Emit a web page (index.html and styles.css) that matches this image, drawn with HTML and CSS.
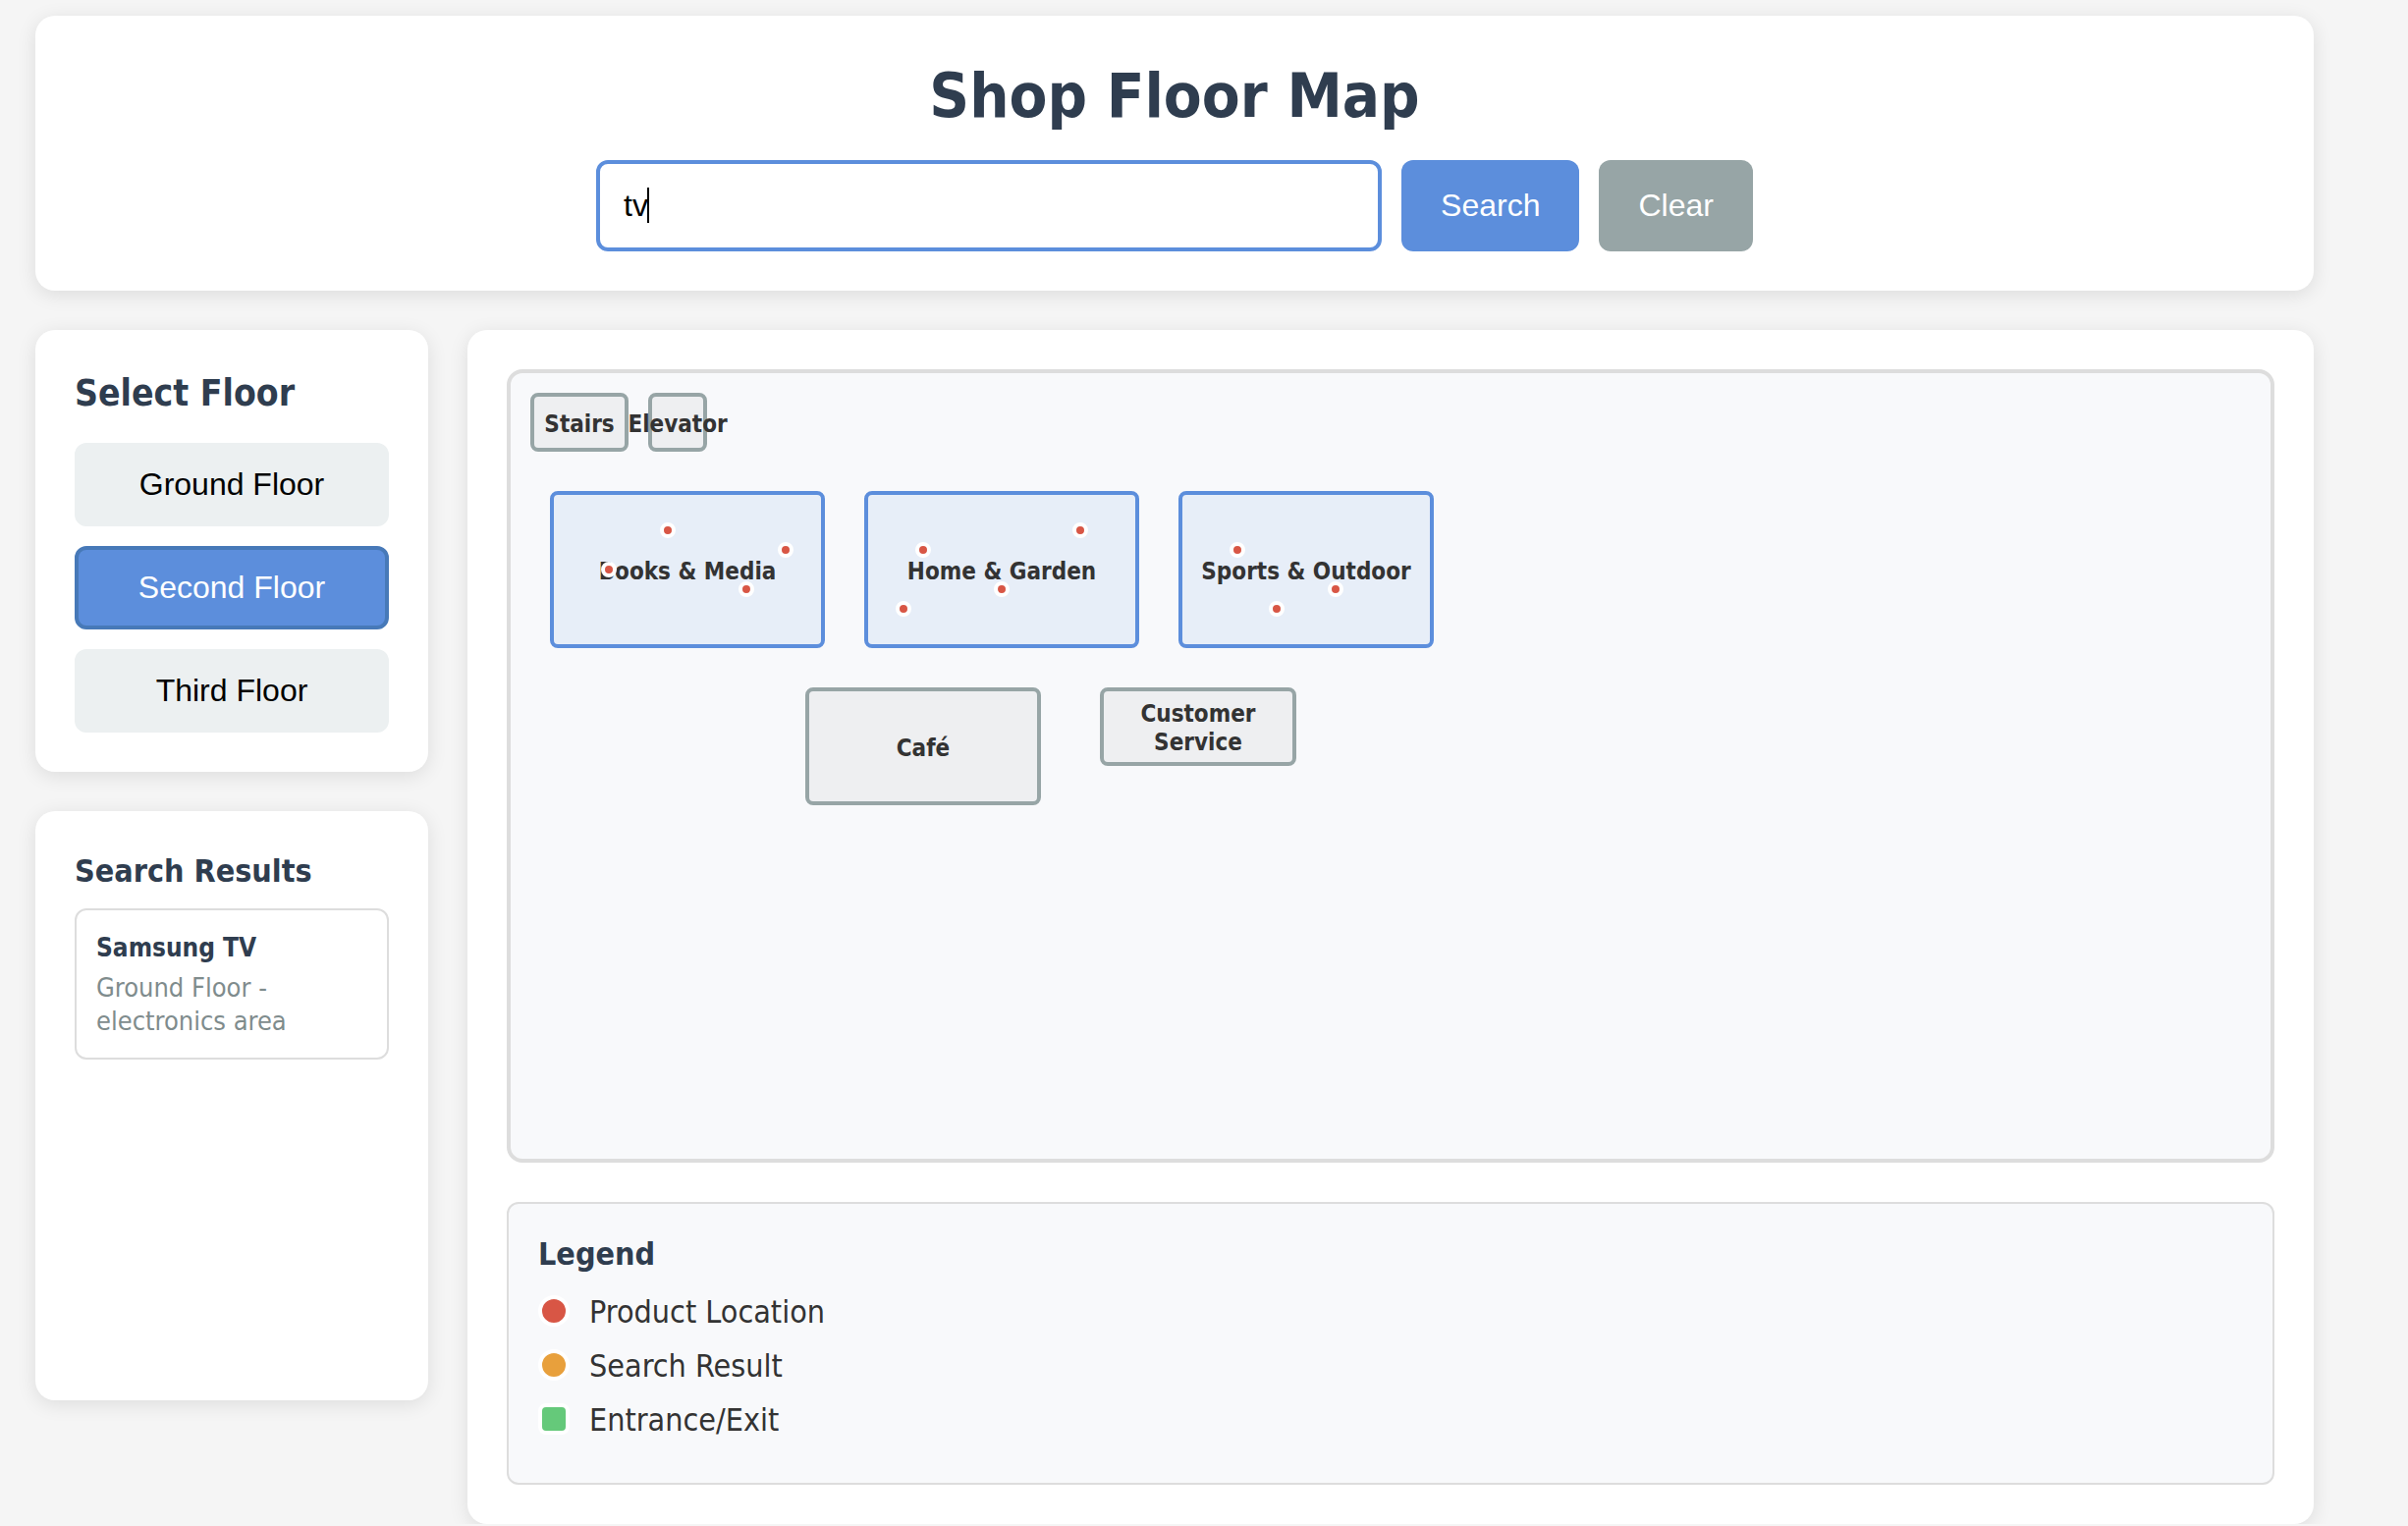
FILE: index.html
```html
<!DOCTYPE html>
<html lang="en">
<head>
<meta charset="utf-8">
<title>Shop Floor Map</title>
<link rel="stylesheet" href="styles.css">
</head>
<body>
<header class="card header">
  <h1 class="title">Shop Floor Map</h1>
  <form class="search">
    <div class="search-field">
      <input class="search-input" type="text" value="tv" aria-label="Search products">
      <span class="caret"></span>
    </div>
    <button class="btn btn-primary" type="button">Search</button>
    <button class="btn btn-muted" type="button">Clear</button>
  </form>
</header>
<div class="layout">
  <aside class="sidebar">
    <section class="card">
      <h2 class="panel-title">Select Floor</h2>
      <div class="floors">
        <button class="floor" type="button">Ground Floor</button>
        <button class="floor floor-active" type="button">Second Floor</button>
        <button class="floor" type="button">Third Floor</button>
      </div>
    </section>
    <section class="card results">
      <h3 class="sub-title">Search Results</h3>
      <div class="result">
        <h4 class="result-name">Samsung TV</h4>
        <p class="result-place">Ground Floor - electronics area</p>
      </div>
    </section>
  </aside>
  <main class="card">
    <div class="map">
      <div class="zone facility stairs">Stairs</div>
      <div class="zone facility elevator">Elevator</div>
      <div class="zone books">Books &amp; Media</div>
      <div class="zone home">Home &amp; Garden</div>
      <div class="zone sports">Sports &amp; Outdoor</div>
      <div class="zone facility cafe">Café</div>
      <div class="zone facility service">Customer Service</div>
      <span class="pin" style="left:160px;top:160px"></span>
      <span class="pin" style="left:280px;top:180px"></span>
      <span class="pin" style="left:100px;top:200px"></span>
      <span class="pin" style="left:240px;top:220px"></span>
      <span class="pin" style="left:420px;top:180px"></span>
      <span class="pin" style="left:580px;top:160px"></span>
      <span class="pin" style="left:500px;top:220px"></span>
      <span class="pin" style="left:400px;top:240px"></span>
      <span class="pin" style="left:740px;top:180px"></span>
      <span class="pin" style="left:840px;top:220px"></span>
      <span class="pin" style="left:780px;top:240px"></span>
    </div>
    <section class="legend">
      <h3 class="sub-title">Legend</h3>
      <ul class="legend-list">
        <li class="legend-item"><span class="marker marker-product"></span><span class="legend-label">Product Location</span></li>
        <li class="legend-item"><span class="marker marker-result"></span><span class="legend-label">Search Result</span></li>
        <li class="legend-item"><span class="marker marker-entrance"></span><span class="legend-label">Entrance/Exit</span></li>
      </ul>
    </section>
  </main>
</div>
</body>
</html>
```

FILE: styles.css
```css
* {
  box-sizing: border-box;
  margin: 0;
  padding: 0;
}

body {
  padding: 16px 96px 0 36px;
  background: #f5f5f5;
  color: #333;
  font-family: Tahoma, "DejaVu Sans Condensed", sans-serif;
  font-size: 32px;
  line-height: 39px;
}

.card {
  padding: 40px;
  border-radius: 20px;
  background: #fff;
  box-shadow: 0 4px 20px rgba(0, 0, 0, 0.1);
}

.header {
  margin-bottom: 40px;
}

.title {
  margin-bottom: 24px;
  color: #2f3d4f;
  font-size: 63px;
  line-height: 83px;
  text-align: center;
}

.search {
  display: flex;
  justify-content: center;
  gap: 20px;
}

.search-field {
  position: relative;
  flex: 0 1 800px;
}

.search-input {
  display: block;
  width: 100%;
  padding: 24px;
  border: 4px solid #5c8edc;
  border-radius: 12px;
  outline: none;
  background: #fff;
  color: #000;
  font: 32px/37px "Liberation Sans", Arial, sans-serif;
}

.caret {
  position: absolute;
  top: 28px;
  left: 52px;
  width: 2px;
  height: 36px;
  background: #000;
}

.btn,
.floor {
  border: 0;
  border-radius: 12px;
  font: 32px/37px "Liberation Sans", Arial, sans-serif;
}

.btn {
  padding: 28px 40px;
  color: #fff;
}

.btn-primary {
  background: #5c8edc;
}

.btn-muted {
  background: #97a5a6;
}

.layout {
  display: grid;
  grid-template-columns: 400px 1fr;
  gap: 40px;
  align-items: start;
}

.sidebar {
  display: grid;
  gap: 40px;
}

.panel-title {
  margin-bottom: 26px;
  color: #2f3d4f;
  font-size: 37px;
  line-height: 49px;
}

.floors {
  display: grid;
  gap: 20px;
}

.floor {
  padding: 20px;
  border: 4px solid #ecf0f1;
  background: #ecf0f1;
  color: #000;
}

.floor-active {
  border-color: #4779b8;
  background: #5c8edc;
  color: #fff;
}

.results {
  min-height: 600px;
}

.sub-title {
  margin-bottom: 16px;
  color: #2f3d4f;
  font-size: 32px;
  line-height: 43px;
}

.result {
  padding: 20px;
  border: 2px solid #ddd;
  border-radius: 12px;
}

.result-name {
  margin-bottom: 6px;
  color: #2f3d4f;
  font-size: 26px;
  line-height: 36px;
}

.result-place {
  color: #7f8c8d;
  font-size: 27px;
  line-height: 34px;
}

.map {
  position: relative;
  height: 808px;
  margin-bottom: 40px;
  border: 4px solid #ddd;
  border-radius: 16px;
  background: #f8f9fb;
}

.zone {
  position: absolute;
  display: flex;
  align-items: center;
  justify-content: center;
  padding-top: 4px;
  border: 4px solid #5c8edc;
  border-radius: 8px;
  background: #e7eef8;
  font-size: 24px;
  font-weight: bold;
  line-height: 29px;
  text-align: center;
}

.facility {
  border-color: #97a5a6;
  background: #eeeff1;
}

.stairs {
  top: 20px;
  left: 20px;
  width: 100px;
  height: 60px;
}

.elevator {
  top: 20px;
  left: 140px;
  width: 60px;
  height: 60px;
}

.books {
  top: 120px;
  left: 40px;
  width: 280px;
  height: 160px;
}

.home {
  top: 120px;
  left: 360px;
  width: 280px;
  height: 160px;
}

.sports {
  top: 120px;
  left: 680px;
  width: 260px;
  height: 160px;
}

.cafe {
  top: 320px;
  left: 300px;
  width: 240px;
  height: 120px;
}

.service {
  top: 320px;
  left: 600px;
  width: 200px;
  height: 80px;
}

/* left/top of a pin give its centre on the map */
.pin {
  position: absolute;
  width: 16px;
  height: 16px;
  margin: -8px 0 0 -8px;
  border: 4px solid #fff;
  border-radius: 50%;
  background: #d85645;
}

.legend {
  padding: 30px;
  border: 2px solid #ddd;
  border-radius: 12px;
  background: #f8f9fb;
}

.legend-list {
  list-style: none;
}

.legend-item {
  display: flex;
  align-items: center;
  gap: 20px;
  margin-bottom: 16px;
}

.legend-label {
  padding-top: 4px;
  line-height: 35px;
}

.marker {
  width: 32px;
  height: 32px;
  border: 4px solid #fff;
  border-radius: 50%;
}

.marker-product {
  background: #d85645;
}

.marker-result {
  background: #e8a03c;
}

.marker-entrance {
  border-radius: 8px;
  background: #65c97a;
}
```
